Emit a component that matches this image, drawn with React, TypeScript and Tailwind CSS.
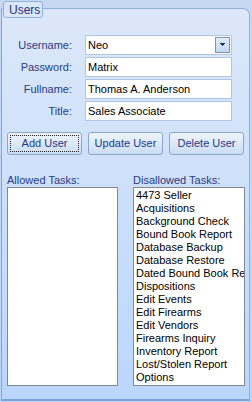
const tasks = [
  "4473 Seller",
  "Acquisitions",
  "Background Check",
  "Bound Book Report",
  "Database Backup",
  "Database Restore",
  "Dated Bound Book Report",
  "Dispositions",
  "Edit Events",
  "Edit Firearms",
  "Edit Vendors",
  "Firearms Inquiry",
  "Inventory Report",
  "Lost/Stolen Report",
  "Options",
]

const fields = [
  { label: "Password:", value: "Matrix" },
  { label: "Fullname:", value: "Thomas A. Anderson" },
  { label: "Title:", value: "Sales Associate" },
]

const UserButton = ({ children, focused }: { children: string; focused?: boolean }) => (
  <button
    type="button"
    className="w-[75px] h-[23px] rounded-[3px] border border-[#8ea6cb] bg-gradient-to-b from-[#eef4fd] via-[#dde9f9] to-[#c9dcf6] p-[2px] text-[11px] text-[#1f3a86]"
  >
    <span className={`flex h-full w-full items-center justify-center ${focused ? "border border-dotted border-[#222]" : ""}`}>
      {children}
    </span>
  </button>
)

export default function App() {
  return (
    <div className="w-[252px] h-[402px] overflow-hidden bg-gradient-to-b from-[#c5d9f4] to-[#bcd6fb] pt-[8px] pl-[1px] pr-[2px] font-['Liberation_Sans',Arial,sans-serif] text-[11px] leading-[13px]">
      <div className="relative h-[393px] rounded-tr-[7px] border border-b-2 border-[#8fb1de] border-b-[#7aa2db] border-l-[#7fa5db] bg-gradient-to-b from-[#dce8f9] to-[#bbd6fc]">
        {/* group title */}
        <div className="absolute left-[1px] top-[-8px] h-[17px] w-[40px] rounded-[3px] border border-[#8fb1de] bg-[#dae7f9] pl-[5px] pt-[1px] text-[12px] leading-[14px] text-[#2c2f86]">
          Users
        </div>

        <div className="flex flex-col gap-[2px] pt-[26px]">
          <div className="flex items-center gap-[13px]">
            <span className="w-[70px] text-right text-[#283a85]">Username:</span>
            <div className="flex h-[20px] w-[147px] items-center justify-between border border-[#b2c6e3] bg-white pl-[2px] pr-[1px] text-black">
              <span>Neo</span>
              <span className="flex h-[16px] w-[15px] items-center justify-center border border-[#7d93bb] bg-gradient-to-b from-[#e3edfb] to-[#c3d7f3]">
                <svg width="7" height="4" viewBox="0 0 7 4">
                  <path d="M1 0h5v1H5v1H4v1H3V2H2V1H1z" fill="#1b2a5e" />
                </svg>
              </span>
            </div>
          </div>
          {fields.map((f) => (
            <div key={f.label} className="flex items-center gap-[13px]">
              <span className="w-[70px] text-right text-[#283a85]">{f.label}</span>
              <div className="flex h-[20px] w-[147px] items-center border border-[#b2c6e3] bg-white pl-[2px] text-black">
                {f.value}
              </div>
            </div>
          ))}
        </div>

        <div className="mt-[11px] flex gap-[6px] pl-[5px]">
          <UserButton focused>Add User</UserButton>
          <UserButton>Update User</UserButton>
          <UserButton>Delete User</UserButton>
        </div>

        <div className="mt-[19px] flex gap-[15px] pl-[5px]">
          <div className="flex flex-col">
            <span className="h-[13px] text-[#283a85]">Allowed Tasks:</span>
            <div className="h-[199px] w-[111px] border border-[#828790] bg-white" />
          </div>
          <div className="flex flex-col">
            <span className="h-[13px] text-[#283a85]">Disallowed Tasks:</span>
            <div className="h-[199px] w-[112px] overflow-hidden border border-[#828790] bg-white pl-[2px] pt-[1px] text-black">
              {tasks.map((t) => (
                <div key={t} className="h-[13px] whitespace-nowrap">
                  {t}
                </div>
              ))}
            </div>
          </div>
        </div>
      </div>
    </div>
  )
}
